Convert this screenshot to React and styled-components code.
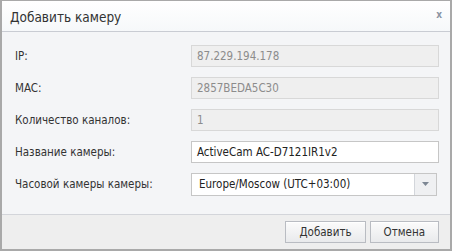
import { styled, createGlobalStyle } from "styled-components";

const Global = createGlobalStyle`
  html, body {
    margin: 0;
    padding: 0;
    background: #ffffff;
  }
  * {
    box-sizing: border-box;
  }
`;

const fields = [
  { label: "IP:", value: "87.229.194.178", disabled: true },
  { label: "MAC:", value: "2857BEDA5C30", disabled: true },
  { label: "Количество каналов:", value: "1", disabled: true },
  { label: "Название камеры:", value: "ActiveCam AC-D7121IR1v2" },
];

export default function App() {
  return (
    <>
      <Global />
      <Dialog>
        <Header>
          <Title>Добавить камеру</Title>
          <Close>x</Close>
        </Header>
        <Body>
          {fields.map((f) => (
            <Row key={f.label}>
              <Label>{f.label}</Label>
              <Input $disabled={f.disabled}>{f.value}</Input>
            </Row>
          ))}
          <Row>
            <Label>Часовой камеры камеры:</Label>
            <Select>
              <SelectValue>Europe/Moscow (UTC+03:00)</SelectValue>
              <SelectArrow>
                <svg width="7" height="4" viewBox="0 0 7 4">
                  <path d="M0 0h7L3.5 4z" fill="#7d8794" />
                </svg>
              </SelectArrow>
            </Select>
          </Row>
        </Body>
        <Footer>
          <Button>Добавить</Button>
          <Button>Отмена</Button>
        </Footer>
      </Dialog>
    </>
  );
}

const Dialog = styled.div`
  width: 452px;
  height: 251px;
  border: 1px solid #a9a9a9;
  border-width: 1px 2px 2px 2px;
  display: flex;
  flex-direction: column;
  font-family: "DejaVu Sans Condensed", "DejaVu Sans", Tahoma, sans-serif;
  background: #f4f5f7;
`;

const Header = styled.div`
  height: 31px;
  flex: none;
  display: flex;
  align-items: center;
  justify-content: space-between;
  padding: 0 8px 0 8px;
  background: linear-gradient(#ffffff, #f6f8fa);
  border-bottom: 1px solid #c9ccd3;
`;

const Title = styled.div`
  font-size: 13.5px;
  color: #333333;
  padding-top: 2px;
`;

const Close = styled.div`
  font-size: 10px;
  font-weight: bold;
  color: #8a94a3;
  margin-top: -3px;
`;

const Body = styled.div`
  flex: 1;
  padding: 13px 10px 0 13px;
  display: flex;
  flex-direction: column;
  gap: 10px;
  background: #f4f5f7;
`;

const Row = styled.div`
  display: flex;
  align-items: center;
  height: 22px;
`;

const Label = styled.div`
  width: 176px;
  flex: none;
  font-size: 11.5px;
  color: #333333;
`;

const Input = styled.div`
  width: 248px;
  height: 22px;
  display: flex;
  align-items: center;
  padding: 0 5px;
  font-size: 11.5px;
  border: 1px solid ${(p) => (p.$disabled ? "#d8d8d8" : "#c6c6c6")};
  background: ${(p) => (p.$disabled ? "#efefef" : "#ffffff")};
  color: ${(p) => (p.$disabled ? "#8c8c8c" : "#222222")};
`;

const Select = styled.div`
  width: 246px;
  height: 23px;
  display: flex;
  border: 1px solid #c6c6c6;
  background: #ffffff;
`;

const SelectValue = styled.div`
  flex: 1;
  display: flex;
  align-items: center;
  padding: 0 7px;
  font-size: 11.5px;
  color: #222222;
`;

const SelectArrow = styled.div`
  width: 22px;
  display: flex;
  align-items: center;
  justify-content: center;
  background: #eff0f2;
  border-left: 1px solid #d3d6db;
`;

const Footer = styled.div`
  height: 35px;
  flex: none;
  border-top: 1px solid #d3d5da;
  background: #eeeeee;
  display: flex;
  justify-content: flex-end;
  align-items: center;
  gap: 4px;
  padding: 2px 11px 2px 0;
`;

const Button = styled.div`
  height: 22px;
  padding: 0 13px;
  display: flex;
  align-items: center;
  font-size: 11.5px;
  color: #333333;
  border: 1px solid #b9bcc2;
  background: linear-gradient(#fbfbfb, #e9eaec);
  box-shadow: inset 0 1px 0 #ffffff;
`;
